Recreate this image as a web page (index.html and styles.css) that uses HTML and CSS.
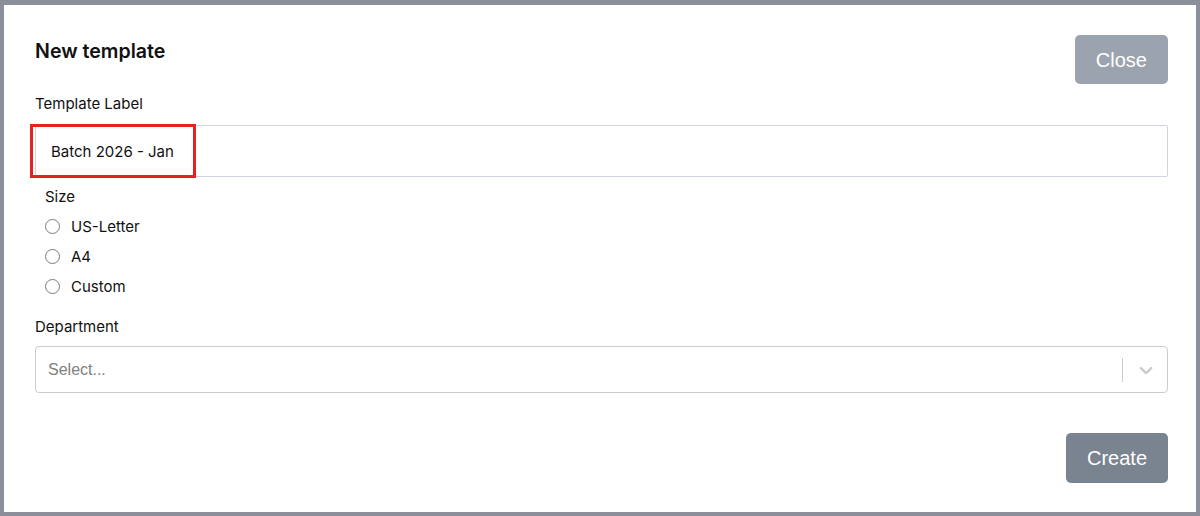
FILE: index.html
```html
<!DOCTYPE html>
<html lang="en">
<head>
    <meta charset="UTF-8">
    <meta name="viewport" content="width=device-width, initial-scale=1.0">
    <title>New template</title>
    <link rel="stylesheet" href="styles.css">
</head>
<body>
    <div class="modal">
        <div class="modal-header">
            <h2>New template</h2>
            <button class="btn btn-close">Close</button>
        </div>

        <label class="field-label" for="label">Template Label</label>
        <div class="input-wrap">
            <input id="label" class="text-input" value="Batch 2026 - Jan">
            <div class="highlight"></div>
        </div>

        <div class="size-group">
            <div class="size-title">Size</div>
            <label class="radio-row"><input type="radio" name="size"> US-Letter</label>
            <label class="radio-row"><input type="radio" name="size"> A4</label>
            <label class="radio-row"><input type="radio" name="size"> Custom</label>
        </div>

        <div class="field-label dept-label">Department</div>
        <div class="select">
            <span class="placeholder">Select...</span>
            <div class="indicators">
                <span class="separator"></span>
                <svg class="chevron" width="20" height="20" viewBox="0 0 20 20">
                    <path d="M4.516 7.548c0.436-0.446 1.043-0.481 1.576 0l3.908 3.747 3.908-3.747c0.533-0.481 1.141-0.446 1.574 0 0.436 0.445 0.408 1.197 0 1.615-0.406 0.418-4.695 4.502-4.695 4.502-0.217 0.223-0.502 0.335-0.787 0.335s-0.57-0.112-0.789-0.335c0 0-4.287-4.084-4.695-4.502s-0.436-1.17 0-1.615z"></path>
                </svg>
            </div>
        </div>

        <div class="modal-footer">
            <button class="btn btn-create">Create</button>
        </div>
    </div>
</body>
</html>
```

FILE: styles.css
```css
body {
    margin: 0;
    padding: 5px 4px 4px 4px;
    background-color: #8a8f99;
    font-family: Inter, "Noto Sans", sans-serif;
    color: #111;
}

.modal {
    background: #fff;
    height: 507px;
    box-sizing: border-box;
    padding: 30px 28px 29px 31px;
}

.modal-header {
    display: flex;
    justify-content: space-between;
    align-items: flex-start;
    height: 49px;
}

.modal-header h2 {
    margin: 4px 0 0 0;
    font-size: 19.6px;
    font-weight: 600;
    line-height: 24px;
}

.btn {
    border: none;
    border-radius: 5px;
    color: #fff;
    font-family: "Liberation Sans", Arial, sans-serif;
    font-size: 20px;
    padding: 0 21px;
    cursor: pointer;
}

.btn-close {
    height: 49px;
    padding-top: 2px;
    background-color: #9ba3ae;
}

.btn-create {
    height: 50px;
    padding-top: 1px;
    background-color: #7a8390;
}

.field-label {
    display: block;
    font-size: 15px;
    line-height: 20px;
    margin-top: 10px;
    margin-bottom: 11px;
}

.input-wrap {
    position: relative;
}

.text-input {
    display: block;
    width: 100%;
    height: 52px;
    box-sizing: border-box;
    border: 1px solid #cfd5de;
    border-radius: 2px;
    padding: 0 15px;
    font-family: Inter, "Noto Sans", sans-serif;
    font-size: 15px;
    color: #111;
    outline: none;
}

/* red box marking the typed value */
.highlight {
    position: absolute;
    left: -5px;
    top: -1px;
    width: 166px;
    height: 54px;
    box-sizing: border-box;
    border: 3px solid #e32222;
}

.size-group {
    padding-left: 10px;
    margin-top: 4px;
}

.size-title,
.radio-row {
    height: 30px;
    display: flex;
    align-items: center;
    font-size: 15px;
}

.radio-row input {
    appearance: none;
    width: 15px;
    height: 15px;
    margin: 0 11px 0 0;
    border: 1.5px solid #7a7a7a;
    border-radius: 50%;
    box-sizing: border-box;
}

.dept-label {
    margin-top: 16px;
    margin-bottom: 9px;
}

.select {
    height: 47px;
    box-sizing: border-box;
    border: 1px solid #cccccc;
    border-radius: 4px;
    display: flex;
    align-items: center;
    padding-left: 12px;
}

.placeholder {
    flex: 1;
    font-family: "Liberation Sans", Arial, sans-serif;
    font-size: 16px;
    color: #808080;
}

.indicators {
    display: flex;
    align-items: center;
    height: 100%;
}

.separator {
    width: 1px;
    height: 24px;
    background-color: #cccccc;
}

.chevron {
    fill: #cccccc;
    padding: 0 11px 0 13px;
    transform: scale(1.1);
}

.modal-footer {
    display: flex;
    justify-content: flex-end;
    margin-top: 40px;
}
```
